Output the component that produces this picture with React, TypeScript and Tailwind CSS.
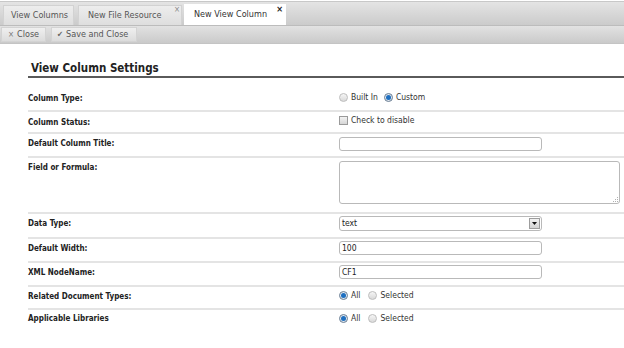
import React from "react";

const FONT = { fontFamily: '"DejaVu Sans Condensed", "Liberation Sans", sans-serif' };

function Radio({ checked }: { checked?: boolean }) {
  return checked ? (
    <span className="inline-flex items-center justify-center w-[9px] h-[9px] rounded-full border border-[#6b7f94] bg-[#dfe6ee]">
      <span className="w-[5px] h-[5px] rounded-full bg-[#1e6fc0]" />
    </span>
  ) : (
    <span className="inline-block w-[9px] h-[9px] rounded-full border border-[#bdbdbd] bg-gradient-to-b from-[#f6f6f6] to-[#d9d9d9]" />
  );
}

function Row({
  label,
  h,
  last,
  children,
  ctrlPad = "pt-[3px]",
  labelPad = "pt-[5px]",
}: {
  label: string;
  h: string;
  last?: boolean;
  children?: React.ReactNode;
  ctrlPad?: string;
  labelPad?: string;
}) {
  return (
    <div className={`flex ${h} ${last ? "" : "border-b-2 border-[#e4e4e4]"}`}>
      <div className={`w-[311px] shrink-0 ${labelPad} text-[8px] leading-[11px] font-bold text-[#222]`}>{label}</div>
      <div className={`flex-1 ${ctrlPad}`}>{children}</div>
    </div>
  );
}

function TextBox({ value, w = "w-[203px]" }: { value?: string; w?: string }) {
  return (
    <div className={`${w} h-[14px] rounded-[3px] border border-[#b9b9b9] bg-white pl-[2px] text-[8.5px] leading-[12px] text-[#222]`}>
      {value}
    </div>
  );
}

export default function App() {
  return (
    <div className="w-[624px] h-[348px] bg-white overflow-hidden" style={FONT}>
      {/* tab bar */}
      <div className="h-[24px] border-t border-[#c8c8c8] bg-gradient-to-b from-[#e4e4e4] to-[#cbcbcb] flex items-end pl-[3px] mt-[1px]">
        <div className="w-[71px] h-[20px] border border-b-0 border-[#d2d2d2] bg-gradient-to-b from-[#ededed] to-[#dedede] pl-[7px] text-[9px] leading-[19px] text-[#555]">
          View Columns
        </div>
        <div className="relative ml-[4px] w-[104px] h-[20px] border border-b-0 border-[#d2d2d2] bg-gradient-to-b from-[#ededed] to-[#dedede] pl-[9px] text-[9px] leading-[19px] text-[#555]">
          New File Resource
          <span className="absolute right-[1px] top-[0px] text-[8px] leading-[8px] text-[#888]">×</span>
        </div>
        <div className="relative ml-[2px] w-[102px] h-[21px] bg-white pl-[10px] text-[9px] leading-[20px] text-[#333]">
          New View Column
          <span className="absolute right-[3px] top-[1px] text-[9px] leading-[9px] font-bold text-[#222]">×</span>
        </div>
      </div>
      {/* toolbar */}
      <div className="h-[19px] border-t border-[#bcbcbc] border-b border-b-[#c4c4c4] bg-gradient-to-b from-[#e2e2e2] to-[#cacaca] flex items-center pl-[1px]">
        <div className="h-[15px] w-[45px] bg-gradient-to-b from-[#efefef] to-[#dcdcdc] border border-[#d3d3d3] flex items-center pl-[6px] text-[9px] text-[#555]">
          <span className="text-[8px] mr-[3px] text-[#777]">×</span>Close
        </div>
        <div className="ml-[5px] h-[15px] w-[86px] bg-gradient-to-b from-[#efefef] to-[#dcdcdc] border border-[#d3d3d3] flex items-center pl-[5px] text-[9px] text-[#555]">
          <span className="text-[8px] mr-[3px] text-[#666]">✔</span>Save and Close
        </div>
      </div>
      {/* content */}
      <div className="pl-[28px]">
        <div className="pt-[16px] pl-[3px] text-[11.5px] leading-[16px] font-bold text-[#222] border-b-2 border-[#5a5a5a]">
          View Column Settings
        </div>
        <div className="mt-[10px]">
          <Row label="Column Type:" h="h-[24px]" ctrlPad="pt-[4px]">
            <div className="flex items-center h-[11px] text-[8.5px] text-[#333]">
              <Radio />
              <span className="ml-[3px] mr-[6px]">Built In</span>
              <Radio checked />
              <span className="ml-[3px]">Custom</span>
            </div>
          </Row>
          <Row label="Column Status:" h="h-[22px]" ctrlPad="pt-[3px]">
            <div className="flex items-center h-[11px] text-[8.5px] text-[#333]">
              <span className="inline-block w-[9px] h-[9px] border border-[#9a9a9a] bg-gradient-to-b from-[#f3f3f3] to-[#d6d6d6]" />
              <span className="ml-[3px]">Check to disable</span>
            </div>
          </Row>
          <Row label="Default Column Title:" h="h-[24px]" ctrlPad="pt-[3px]" labelPad="pt-[4px]">
            <TextBox />
          </Row>
          <Row label="Field or Formula:" h="h-[56px]" ctrlPad="pt-[3px]" labelPad="pt-[4px]">
            <div className="relative w-[281px] h-[43px] rounded-[3px] border border-[#b9b9b9] bg-white">
              <svg className="absolute right-[1px] bottom-[1px]" width="5" height="5" viewBox="0 0 5 5">
                <rect x="4" y="0" width="1" height="1" fill="#b0b0b0" />
                <rect x="2" y="2" width="1" height="1" fill="#b0b0b0" />
                <rect x="4" y="2" width="1" height="1" fill="#b0b0b0" />
                <rect x="0" y="4" width="1" height="1" fill="#b0b0b0" />
                <rect x="2" y="4" width="1" height="1" fill="#b0b0b0" />
                <rect x="4" y="4" width="1" height="1" fill="#b0b0b0" />
              </svg>
            </div>
          </Row>
          <Row label="Data Type:" h="h-[25px]" ctrlPad="pt-[2px]" labelPad="pt-[4px]">
            <div className="relative w-[203px] h-[15px] rounded-[3px] border border-[#b9b9b9] bg-white pl-[2px] text-[8.5px] leading-[13px] text-[#222]">
              text
              <span className="absolute right-[1px] top-[1px] w-[11px] h-[11px] border border-[#9d9d9d] bg-gradient-to-b from-[#f2f2f2] to-[#d3d3d3] flex items-center justify-center">
                <svg width="5" height="3" viewBox="0 0 5 3">
                  <path d="M0 0 H5 L2.5 3 Z" fill="#111" />
                </svg>
              </span>
            </div>
          </Row>
          <Row label="Default Width:" h="h-[24px]" ctrlPad="pt-[2px]" labelPad="pt-[4px]">
            <TextBox value="100" />
          </Row>
          <Row label="XML NodeName:" h="h-[24px]" ctrlPad="pt-[2px]" labelPad="pt-[4px]">
            <TextBox value="CF1" />
          </Row>
          <Row label="Related Document Types:" h="h-[23px]" ctrlPad="pt-[3px]" labelPad="pt-[4px]">
            <div className="flex items-center h-[11px] text-[8.5px] text-[#333]">
              <Radio checked />
              <span className="ml-[3px] mr-[8px]">All</span>
              <Radio />
              <span className="ml-[3px]">Selected</span>
            </div>
          </Row>
          <Row label="Applicable Libraries" h="h-[23px]" last ctrlPad="pt-[3px]" labelPad="pt-[3px]">
            <div className="flex items-center h-[11px] text-[8.5px] text-[#333]">
              <Radio checked />
              <span className="ml-[3px] mr-[8px]">All</span>
              <Radio />
              <span className="ml-[3px]">Selected</span>
            </div>
          </Row>
        </div>
      </div>
    </div>
  );
}
